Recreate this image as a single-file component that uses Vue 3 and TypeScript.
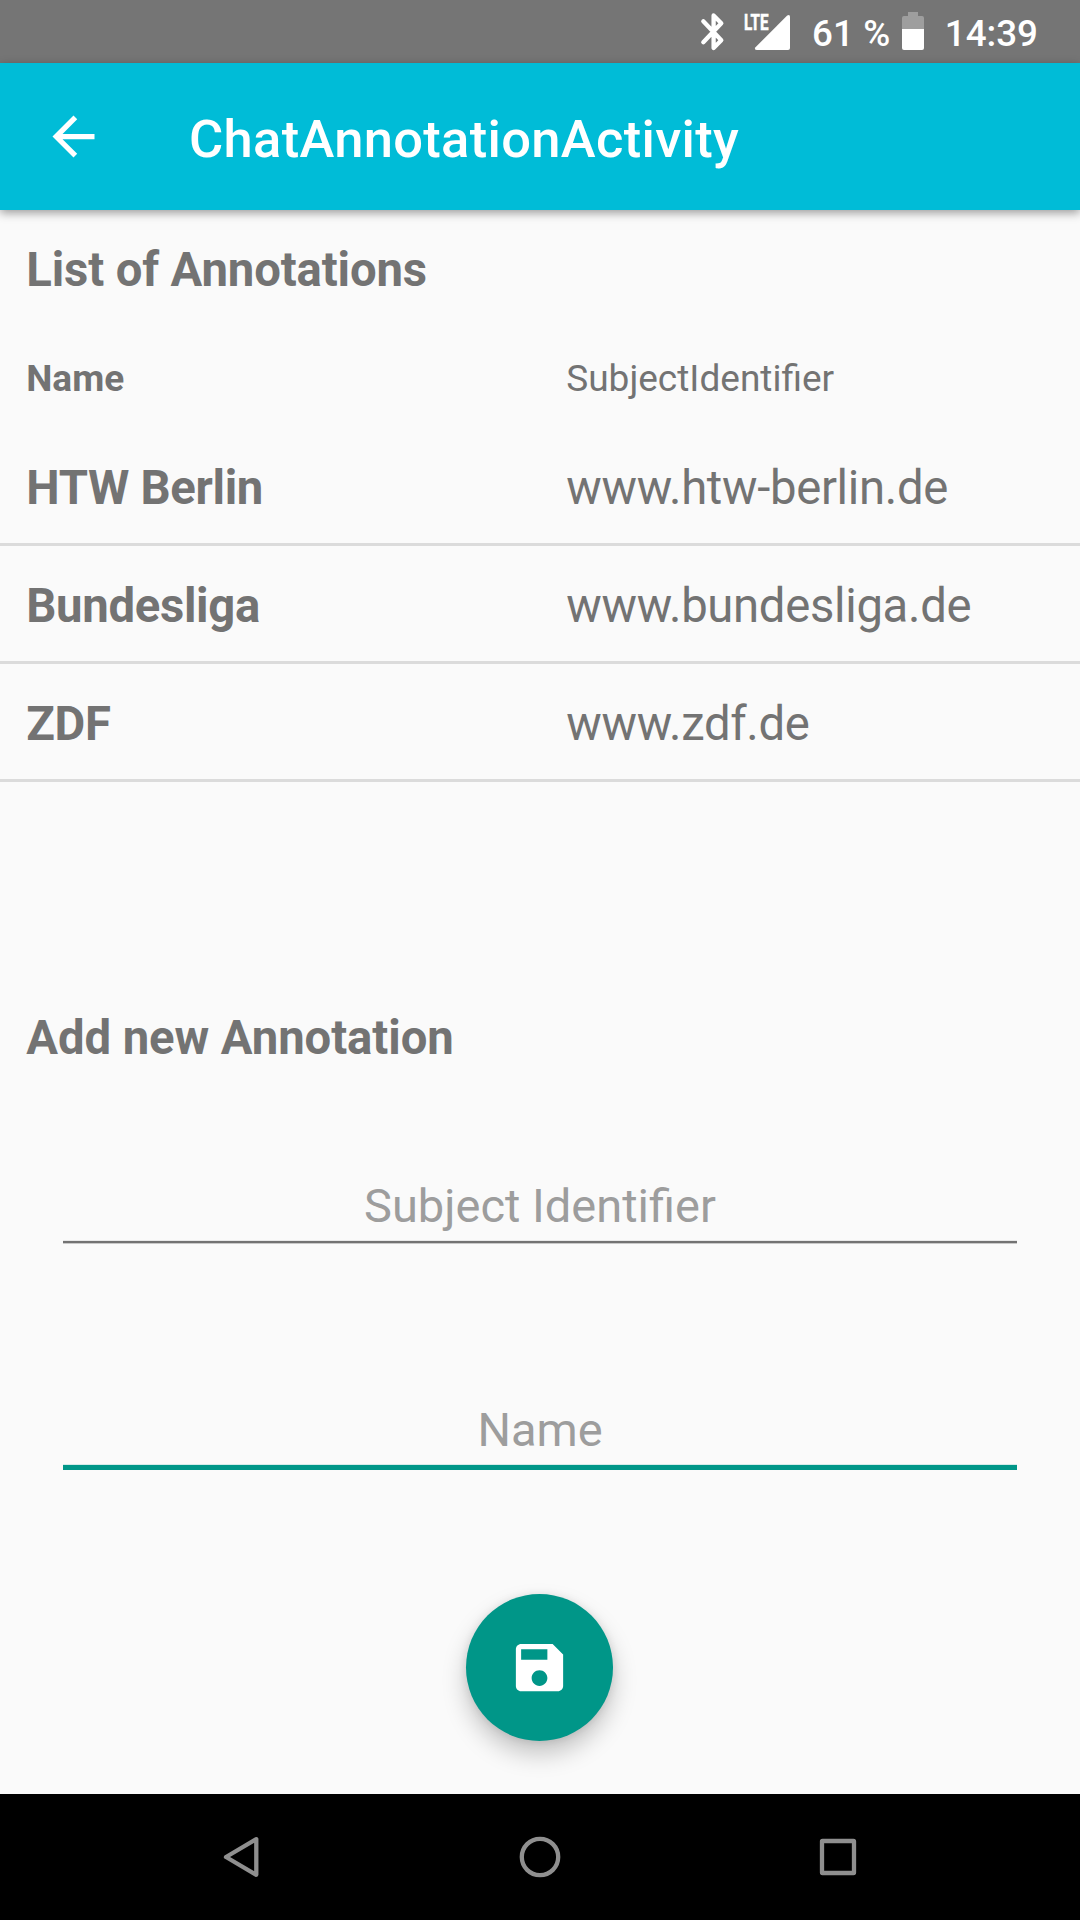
<script setup lang="ts">
interface Annotation {
  name: string
  subject: string
}

const annotations: Annotation[] = [
  { name: 'HTW Berlin', subject: 'www.htw-berlin.de' },
  { name: 'Bundesliga', subject: 'www.bundesliga.de' },
  { name: 'ZDF', subject: 'www.zdf.de' },
]

const fields = [
  { hint: 'Subject Identifier', focused: false },
  { hint: 'Name', focused: true },
]
</script>

<template>
  <div class="screen">
    <div class="status">
      <svg class="bluetooth" width="28" height="40" viewBox="0 0 28 40">
        <path d="M4.3 9.300 L22.300 28.300 L14.600 36 V3.500 L22.300 11.200 L4.300 30.200" fill="none" stroke="#fff" stroke-width="4.3" stroke-linecap="round" stroke-linejoin="round" />
      </svg>
      <svg class="signal" width="48" height="50" viewBox="0 -10 48 50">
        <text x="1" y="17.8" font-size="22.5" font-weight="700" fill="#fff" stroke="#fff" stroke-width=".6" textLength="24.5" lengthAdjust="spacingAndGlyphs">LTE</text>
        <path d="M44.2 3.5 Q47 1.8 47 5 V36 Q47 38 45 38 H14 Q10.800 38 12.500 35.200 Z" fill="#fff" />
      </svg>
      <span class="percent">61 %</span>
      <svg class="battery" width="22" height="38" viewBox="0 0 22 38">
        <path d="M6 0 H16 V4 H20 Q22 4 22 6 V17 H0 V6 Q0 4 2 4 H6 Z" fill="#fff" fill-opacity=".3" />
        <path d="M0 17 H22 V36 Q22 38 20 38 H2 Q0 38 0 36 Z" fill="#fff" />
      </svg>
      <span class="clock">14:39</span>
    </div>

    <header class="appbar">
      <svg width="63" height="63" viewBox="0 0 24 24">
        <path d="M20 11H7.830l5.590-5.590L12 4l-8 8 8 8 1.410-1.410L7.830 13H20v-2z" fill="#fff" />
      </svg>
      <h1>ChatAnnotationActivity</h1>
    </header>

    <main>
      <h2 class="listed">List of Annotations</h2>
      <div class="columns">
        <b>Name</b>
        <span>SubjectIdentifier</span>
      </div>
      <div class="list">
        <div v-for="item in annotations" :key="item.name" class="row">
          <b>{{ item.name }}</b>
          <span>{{ item.subject }}</span>
        </div>
      </div>

      <h2 class="add">Add new Annotation</h2>
      <div v-for="field in fields" :key="field.hint" class="field" :class="{ focused: field.focused }">
        <span>{{ field.hint }}</span>
        <div class="line"></div>
      </div>

      <button class="fab" type="button" aria-label="Save">
        <svg width="63" height="63" viewBox="0 0 24 24">
          <path d="M17 3H5c-1.110 0-2 .9-2 2v14c0 1.100.890 2 2 2h14c1.100 0 2-.9 2-2V7l-4-4zm-5 16c-1.660 0-3-1.340-3-3s1.340-3 3-3 3 1.340 3 3-1.340 3-3 3zm3-10H5V5h10v4z" fill="#fff" />
        </svg>
      </button>
    </main>

    <nav>
      <svg width="44" height="44" viewBox="0 0 44 44"><path d="M6 22 L36.300 4.200 V39.800 Z" /></svg>
      <svg width="44" height="44" viewBox="0 0 44 44"><circle cx="22" cy="22" r="18.200" /></svg>
      <svg width="44" height="44" viewBox="0 0 44 44"><rect x="6" y="6" width="32" height="32" rx=".5" /></svg>
    </nav>
  </div>
</template>

<style>
body {
  margin: 0;
}
</style>

<style scoped>
.screen {
  width: 1080px;
  height: 1920px;
  display: flex;
  flex-direction: column;
  overflow: hidden;
  background: #fafafa;
  color: #737373;
  font-family: Roboto, sans-serif;
  font-size: 47.25px;
  line-height: 56px;
}
svg {
  display: block;
  flex: none;
}
.status {
  height: 63px;
  box-sizing: border-box;
  padding: 12px 42px 0 0;
  display: flex;
  justify-content: flex-end;
  align-items: flex-start;
  background: #757575;
  color: #fff;
  font-size: 36.75px;
  font-weight: 500;
  line-height: 44px;
  white-space: nowrap;
}
.bluetooth {
  margin-right: 16px;
}
.signal {
  margin: -10px 21px 0 0;
}
.percent {
  letter-spacing: 0.1px;
}
.battery {
  margin: 0 21px 0 11.4px;
}
.appbar {
  position: relative;
  height: 147px;
  box-sizing: border-box;
  padding-left: 42px;
  display: flex;
  align-items: center;
  background: #00bcd7;
  color: #fff;
  box-shadow: 0 3px 9px rgba(0, 0, 0, 0.38);
}
h1 {
  margin: 4px 0 0 84px;
  font-size: 52.5px;
  font-weight: 500;
  line-height: 62px;
  letter-spacing: 0.31px;
}
main {
  flex: 1;
  display: flex;
  flex-direction: column;
  padding-top: 32px;
}
h2 {
  margin: 0 0 0 26.25px;
  font-size: 47.25px;
  font-weight: 700;
}
.listed {
  letter-spacing: -0.13px;
}
.columns,
.row {
  display: grid;
  grid-template-columns: 1fr 1fr;
}
.columns > *,
.row > * {
  padding-left: 26.25px;
}
.columns {
  margin: 59px 0 27px;
  font-size: 37px;
  line-height: 44px;
}
.row {
  padding: 32px 0 27px;
  border-bottom: 3px solid #dbdbdb;
  letter-spacing: -0.31px;
}
.add {
  margin-top: 228px;
  letter-spacing: -0.07px;
}
.field {
  margin: 112px 63px 0;
  color: #9d9d9d;
  font-size: 47px;
  text-align: center;
}
.field span {
  display: block;
}
.line {
  height: 2px;
  margin-top: 7px;
  background: #737373;
  box-shadow: 0 1px #c9c9c9, 0 -1px #e8e8e8;
}
.focused {
  margin-top: 159px;
}
.focused .line {
  height: 5px;
  background: #009688;
  box-shadow: 0 -1px #d5ebe9;
}
.fab {
  width: 147px;
  height: 147px;
  margin: 124px 0 0 466px;
  padding: 0;
  border: 0;
  border-radius: 50%;
  display: flex;
  align-items: center;
  justify-content: center;
  background: #009688;
  box-shadow: 0 13px 24px rgba(0, 0, 0, 0.22), 0 1px 8px rgba(0, 0, 0, 0.1);
}
nav {
  height: 126px;
  box-sizing: border-box;
  padding: 0 220px;
  display: flex;
  justify-content: space-between;
  align-items: center;
  background: #000;
}
nav svg {
  fill: none;
  stroke: #8f8f8f;
  stroke-width: 4.3;
  stroke-linejoin: round;
}
</style>
